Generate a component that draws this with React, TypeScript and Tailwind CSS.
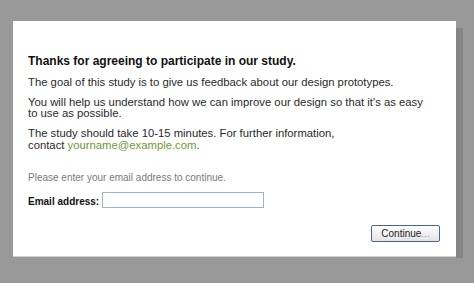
import React from "react";

export default function App() {
  return (
    <div
      className="w-[474px] h-[283px] bg-[#999999] pt-[21px] pl-[13px] overflow-hidden"
      style={{ fontFamily: '"Liberation Sans", Arial, sans-serif' }}
    >
      <div className="relative w-[443px] h-[236px]">
        <div className="absolute top-[7px] right-[-7px] w-[7px] h-[230px] bg-[#858585]" />
        <div className="relative w-full h-full bg-white border-b border-[#d0d0d0] pl-[15px] pr-[10px] pt-[33px] flex flex-col">
          <h1 className="text-[12px] leading-[15px] font-bold text-[#111]">
            Thanks for agreeing to participate in our study.
          </h1>
          <p className="mt-[7px] text-[11.3px] leading-[12px] text-[#2a2a2a]">
            The goal of this study is to give us feedback about our design prototypes.
          </p>
          <p className="mt-[9px] text-[11.3px] leading-[11px] text-[#2a2a2a] w-[404px]">
            You will help us understand how we can improve our design so that it's as easy to use as possible.
          </p>
          <p className="mt-[8px] text-[11.3px] leading-[12px] text-[#2a2a2a]">
            The study should take 10-15 minutes. For further information,
            <br />
            contact <span className="text-[#6b9b34]">yourname@example.com</span>.
          </p>
          <p className="mt-[21px] text-[10px] leading-[12px] text-[#7a7a7a]">
            Please enter your email address to continue.
          </p>
          <div className="mt-[8px] flex items-end gap-[3px]">
            <span className="text-[10px] leading-[12px] font-bold text-[#111]">Email address:</span>
            <input
              type="text"
              className="w-[162px] h-[16px] border border-[#a5b3c9] bg-white outline-none"
            />
          </div>
          <div className="mt-[17px] flex justify-end pr-[6px]">
            <button className="w-[69px] h-[17px] rounded-[2px] border border-[#4f6489] bg-gradient-to-b from-white to-[#e4e4e4] text-[10px] leading-[13px] text-[#222] flex items-center justify-center">
              Continue<span className="text-[#a0a0a0]">...</span>
            </button>
          </div>
        </div>
      </div>
    </div>
  );
}
